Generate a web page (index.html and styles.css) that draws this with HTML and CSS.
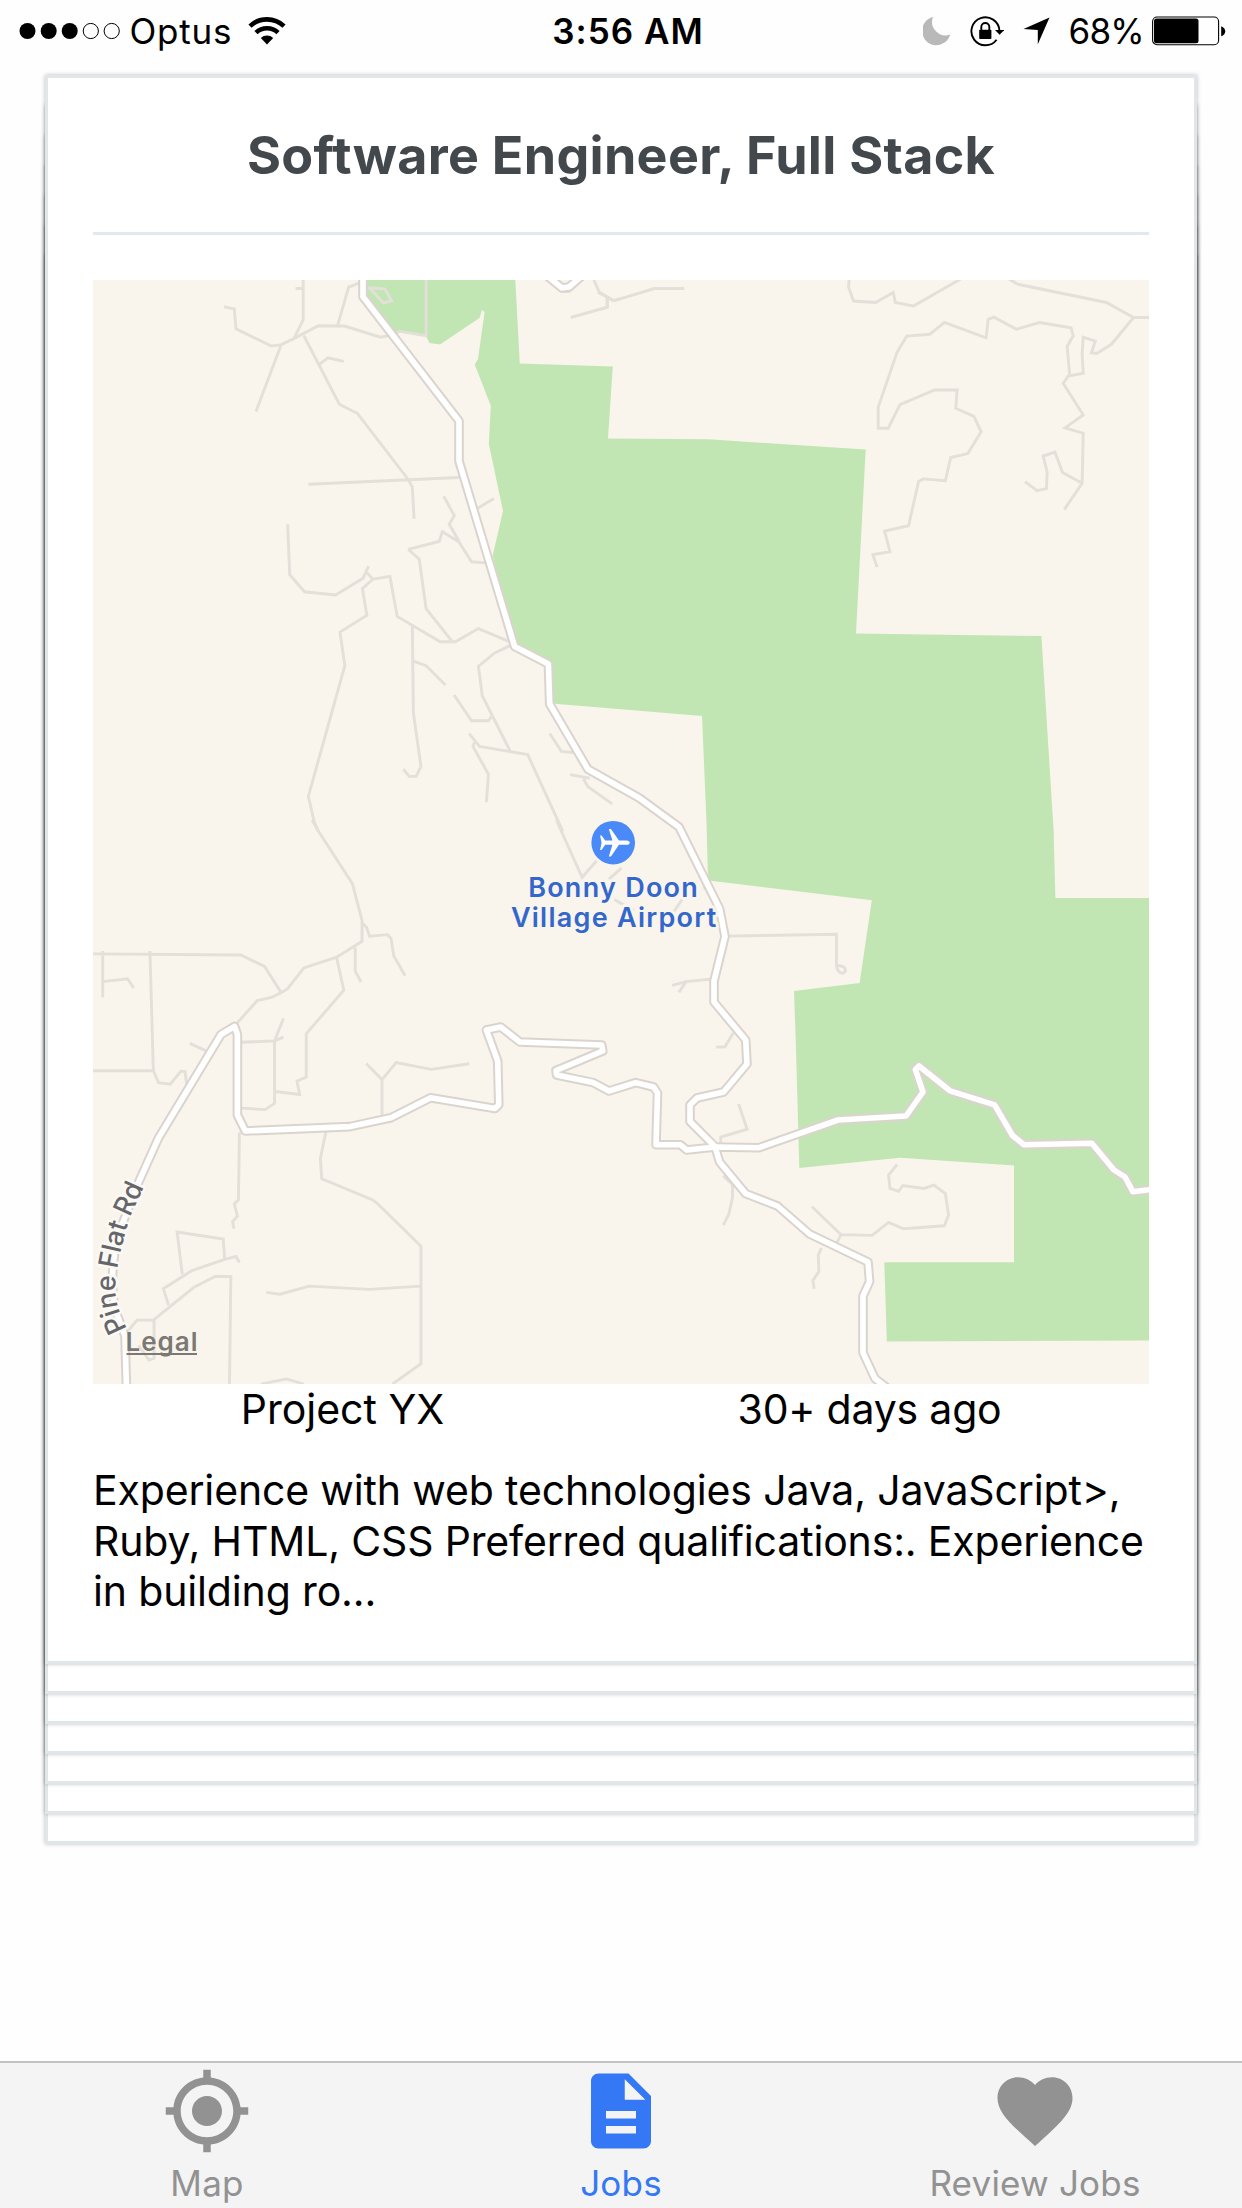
FILE: index.html
```
<!DOCTYPE html>
<html lang="en">
<head>
<meta charset="utf-8">
<title>Jobs</title>
<link rel="stylesheet" href="styles.css">
</head>
<body>
<div class="screen">
  <header class="status">
    <div class="status-left">
      <svg class="signal" width="102" height="20" viewBox="0 0 102 20">
        <circle cx="8.5" cy="10" r="8"/><circle cx="29.7" cy="10" r="8"/><circle cx="50.7" cy="10" r="8"/>
        <circle class="empty" cx="71.8" cy="10" r="7.6"/><circle class="empty" cx="92.7" cy="10" r="7.6"/>
      </svg>
      <span class="carrier">Optus</span>
      <svg class="wifi" width="38" height="28" viewBox="0 0 38 28">
        <path class="arc" d="M2 9.2a24.5 24.5 0 0 1 34 0"/>
        <path class="arc" d="M8 15.6a16 16 0 0 1 22 0"/>
        <path d="M19 27.500l-6.200-6.500a9 9 0 0 1 12.400 0z"/>
      </svg>
    </div>
    <span class="time">3:56 AM</span>
    <div class="status-right">
      <svg class="moon" width="28" height="30" viewBox="0 0 28 30"><path d="M10 1A14.300 14.300 0 1 0 27.200 18.500A13.500 13.500 0 0 1 10 1z"/></svg>
      <svg class="lock" width="34" height="32" viewBox="0 0 34 32">
        <path class="ring" d="M26.600 24.700A14 14 0 1 1 29.400 15.500"/>
        <path d="M25 15h9.200l-4.600 4.800z"/>
        <rect x="9.200" y="14.800" width="12.200" height="9.200" rx="0.800"/>
        <path class="ring" d="M11.300 15v-3a4 4 0 0 1 8 0v3"/>
      </svg>
      <svg class="arrow" width="27" height="28" viewBox="0 0 27 28"><path d="M26.500 0.500L14.800 27.200V13L0.500 12z"/></svg>
      <span class="percent">68%</span>
      <svg class="battery" width="74" height="30" viewBox="0 0 74 30">
        <rect class="shell" x="0.600" y="1" width="66" height="27.700" rx="4.500"/>
        <rect x="2" y="2.500" width="44.500" height="24.800" rx="2.500"/>
        <path d="M69.200 10.200q4 1.500 4 5t-4 5z"/>
      </svg>
    </div>
  </header>

  <main class="deck">
    <div class="sheet s6"></div>
    <div class="sheet s5"></div>
    <div class="sheet s4"></div>
    <div class="sheet s3"></div>
    <div class="sheet s2"></div>
    <div class="sheet s1"></div>
    <article class="sheet card">
      <h1 class="title">Software Engineer, Full Stack</h1>
      <svg class="map" width="1056" height="1104" viewBox="93 280 1056 1104">
        <defs>
          <g id="roads">
            <path d="M363 270V296.800L459 421V461L514.600 646.400L548.400 664L549.700 704L588 769.300L639.300 798L679 827L719.600 908.800L725 936.500L714 981V1002L745.700 1040L747 1064L723.600 1092L697 1098L690 1105V1121.500L715 1146.600L719.600 1162L745.700 1193.600L777.500 1206L809.600 1234L868 1262L869.600 1281.600L863 1296V1352.700L875 1378.600L890 1390"/>
            <path d="M126.500 1390L125 1336L116 1312Q108 1280 118 1235L138.500 1182.500L158.500 1138L221 1034.500L234.600 1026.400L237.400 1034.500V1115L245.300 1131L350 1126.600L391 1117.800L430.600 1097.800L495 1108.500L498.800 1104.800L497.700 1061L486.400 1030L500.800 1027L519.800 1042L601.700 1045L602.800 1051L556 1070.500L556.600 1075L593 1082.600L609 1091L635.700 1082.600L653.600 1087L657.500 1093L656 1144.800H680.400L686.800 1150L715 1147L759 1147.700L838 1120L906 1116L923 1092L915.400 1069.700L919 1066L950 1090.800L994.600 1104.800L1012.500 1135.500L1024 1144.800L1091.800 1143.300L1114 1170L1125 1177L1133 1191.800L1155 1189"/>
            <path d="M546 275L562 288L569 287L583 275"/>
          </g>
          <path id="pine" d="M127.500 1329C118 1312 114.500 1297 115.500 1282C117 1262 124 1235 131 1215L147 1180"/>
        </defs>
        <path class="park" d="M361 280H515.300L519.800 363.600L612.800 366.400L608 438.600L709 439.300L865.700 449.600L856 633.600L1041.400 636L1053.600 830L1055.400 898H1149V1340.600L886.800 1341.600L884.300 1262.200H1014V1165.500L900 1157.700L799.300 1168L796 1049L794 991L859.600 983L871.800 900.300L712.500 881L708 880L706.400 820L702 716L600 707.500L551 703.500L548 664L514.600 646L492.600 555.700L503 511L488.800 444L490.800 405.700L474.700 364.600L478 359L484.600 312L482 310L479.500 318L440 344.600L429.500 343L426 336L400 331L388 334L361 297z"/>

        <!-- lanes: one group for each quarter of the sheet -->
        <g class="lane" transform="translate(80 270) scale(.34439 .35714)">
          <path d="M418 103L448 109L453 165L556 213L585 209L625 190L692 156L768 157L872 188L890 185L930 172L1005 184V20M648 20V140L622 190M626 52H648M812 36L780 48L748 155M583 212L511 396M650 184L753 376L806 402L952 585L965 608L970 697M694 265L720 246L766 256M663 600L1100 581M840 50L881 92L905 86L885 53zM1358 28L1400 60H1420L1455 28M1492 28L1508 62L1548 86L1570 80M1425 133L1531 104V78"/>
          <path d="M603 712L609 853L652 901L742 910L822 863L838 829M834 848L850 866L900 858L921 970L1046 1041H1090L1157 1004L1245 1040M850 866L820 892L833 967L755 1014L769 1108L663 1474L680 1545L692 1572M953 782L985 810L1005 948L1080 1039M953 782L1043 760L1052 733L1100 761L1137 817L1178 820M1056 633L1087 688L1072 712L1100 758M1155 667L1202 640M965 998L968 1240L990 1390L976 1418H956L939 1398M968 1095L1005 1108L1061 1162M1086 1190L1137 1262H1186L1196 1248M1250 1051L1203 1073L1157 1110L1168 1192L1249 1347M1130 1298L1160 1334L1300 1357L1402 1572M1145 1323L1141 1334L1186 1412L1180 1490M1364 1298L1398 1348L1432 1351M1423 1413L1480 1423M1462 1425L1475 1447L1545 1495"/>
        </g>
        <g class="lane" transform="translate(600 270) scale(.35714)">
          <path d="M-6 62L40 86L152 52H236M0 111L20 104V78M698 20L696 48L710 87L772 91L821 63L827 91L878 101L1010 25M1145 25L1170 40L1418 91L1494 133H1540M1494 133L1432 208L1392 233L1376 232L1387 199L1353 188L1350 235L1353 289L1311 297L1297 317L1353 406L1302 442L1353 457L1350 597L1300 671M1350 597L1295 567L1274 510L1241 521L1252 566L1250 612L1224 618L1190 593M1315 292L1308 214L1325 184L1319 162L1230 147L1166 166L1103 132L1087 138L1081 190L964 147L923 180L859 185L832 230L779 384V443H807L840 377L937 336H1000L996 387L1047 410L1067 453L1030 514L982 525L967 590L905 585L892 592L864 716L797 731L812 789L764 797L776 832"/>
        </g>
        <g class="lane" transform="translate(80 820) scale(.34439 .36991)">
          <path d="M674 0L692 30L791 172L819 272V328L745 371L650 400L603 456L585 466L558 479L515 488L455 550M821 280L832 290L841 314L893 310L903 320L911 367L944 421M799 345V408L816 438M745 371L766 460L657 578V695L630 706L638 742L568 734M38 362L467 365L536 396L585 468M66 354V480M66 437L138 429L156 454M203 354L213 678L228 710L262 714L293 679L305 680L310 716M38 678H213M319 604L366 624M470 601L565 597L591 587M565 597L591 536M565 597V766L538 783L470 779M877 797V702L831 658M877 702L918 656L1020 674L1130 659M463 845L460 1027L448 1038L457 1071L443 1086L447 1105M714 843L698 915L702 970L850 1027L865 1038L990 1152V1470L907 1525M541 1277L581 1282L665 1260L840 1269L990 1260M297 1228L282 1114L416 1133L420 1188M463 1196L453 1180L420 1188L325 1218L242 1267L257 1311M140 1380L166 1352H213L330 1264L392 1234H438L434 1530M215 1352V1455L200 1460L170 1420M525 1525L600 1511L650 1525M1383 0L1458 155L1500 110"/>
        </g>
        <g class="lane" transform="translate(600 820) scale(.35714 .36991)">
          <path d="M25 160L60 130M40 215L95 245M205 250L235 208M290 186L300 180M355 314L662 309V392L680 396Q695 408 680 414Q664 414 662 392M315 430L241 437L202 447M241 437L221 466M373 576L350 613L325 614M388 768L412 836L338 857V880M345 962L371 985V1020L361 1065L345 1095M593 1045L675 1121L662 1145M675 1121L762 1123L808 1088L850 1105L964 1097L976 1068L967 1010L935 987L907 996L848 988L836 1004L812 996L808 960L832 931M620 1157L611 1177L613 1220L596 1245L600 1267"/>
        </g>

        <use href="#roads" class="casing"/>
        <use href="#roads" class="surface"/>

        <text class="road-name"><textPath href="#pine" textLength="149">Pine Flat Rd</textPath></text>
        <text class="legal" x="125.500" y="1351">Legal</text>
        <path class="legal-line" d="M126.500 1354H197"/>

        <circle class="pin" cx="613.200" cy="842.700" r="21.800"/>
        <path class="plane" transform="translate(614.600 842.700) rotate(90) scale(1.450) translate(-12 -12)" d="M21.500 16v-1.500l-8-5.500V3.500c0-.83-.67-2-1.500-2s-1.500 1.170-1.500 2V9l-8 5.500v1.500l8-2.500V18.500l-3.500 2.500V22l5-1 5 1v-1l-3.500-2.500v-5l8 2.500z"/>
        <text class="place" x="613.600" y="897">Bonny Doon</text>
        <text class="place" x="614.200" y="927">Village Airport</text>
      </svg>
      <div class="facts">
        <span>Project YX</span>
        <span class="age">30+ days ago</span>
      </div>
      <p class="summary">Experience with web technologies Java, JavaScript&gt;, Ruby, HTML, CSS Preferred qualifications:. Experience in building ro...</p>
    </article>
  </main>

  <nav class="tabs">
    <a class="tab">
      <svg width="90" height="90" viewBox="0 0 24 24"><path d="M12 8c-2.210 0-4 1.790-4 4s1.790 4 4 4 4-1.790 4-4-1.790-4-4-4zm8.940 3c-.46-4.170-3.770-7.480-7.940-7.940V1h-2v2.060C6.830 3.520 3.520 6.830 3.060 11H1v2h2.060c.46 4.170 3.770 7.480 7.940 7.940V23h2v-2.060c4.170-.46 7.480-3.770 7.940-7.940H23v-2h-2.060zM12 19c-3.870 0-7-3.130-7-7s3.130-7 7-7 7 3.130 7 7-3.130 7-7 7z"/></svg>
      <span>Map</span>
    </a>
    <a class="tab active">
      <svg width="90" height="90" viewBox="0 0 24 24"><path d="M14 2H6c-1.100 0-1.990.9-1.990 2L4 20c0 1.100.89 2 1.990 2H18c1.100 0 2-.9 2-2V8l-6-6zm2 16H8v-2h8v2zm0-4H8v-2h8v2zm-3-5V3.500L18.500 9H13z"/></svg>
      <span>Jobs</span>
    </a>
    <a class="tab">
      <svg width="90" height="90" viewBox="0 0 24 24"><path d="M12 21.350l-1.450-1.320C5.400 15.360 2 12.280 2 8.500 2 5.420 4.420 3 7.500 3c1.740 0 3.410.81 4.500 2.090C13.090 3.810 14.760 3 16.500 3 19.580 3 22 5.420 22 8.500c0 3.780-3.400 6.860-8.550 11.540L12 21.350z"/></svg>
      <span>Review Jobs</span>
    </a>
  </nav>
</div>
</body>
</html>
```
FILE: styles.css
```
* { box-sizing: border-box; }

body {
  margin: 0;
  background: #fff;
  color: #000;
  font-family: Inter, "Liberation Sans", sans-serif;
}

svg { display: block; flex: none; }

.screen {
  display: flex;
  flex-direction: column;
  width: 1242px;
  height: 2208px;
  background: #fefefe;
  overflow: hidden;
}

/* status bar */
.status {
  display: grid;
  grid-template-columns: 1fr auto 1fr;
  align-items: center;
  height: 60px;
  padding: 0 16px 0 19px;
  font-size: 35px;
  line-height: 60px;
}
.status-left, .status-right { display: flex; align-items: center; }
.status-right { justify-content: flex-end; }
.carrier, .time, .percent { padding-top: 1px; }
.carrier { margin-left: 8.5px; letter-spacing: 0.8px; }
.time { padding-left: 11px; font-weight: 600; letter-spacing: 1px; }
.percent { margin-left: 18px; letter-spacing: -0.7px; }
.signal .empty { fill: none; stroke: #000; stroke-width: 1; }
.wifi { margin-left: 16px; }
.wifi .arc { fill: none; stroke: #000; stroke-width: 4.6; }
.moon { fill: #b9b9b9; }
.lock { margin-left: 19px; }
.lock .ring { fill: none; stroke: #000; stroke-width: 1.9; }
.arrow { margin-left: 19px; }
.battery { margin-left: 8px; }
.battery .shell { fill: none; stroke: #000; stroke-width: 1.1; }

/* stacked cards */
.deck {
  display: grid;
  flex: 1;
  align-items: start;
  padding: 15px 45px 0;
}
.sheet {
  grid-area: 1 / 1;
  height: 1589px;
  border: 3px solid #e1e6e9;
  background: #fff;
  box-shadow: 0 0 4px rgba(0, 0, 0, 0.26);
}
.s1 { transform: translateY(30px); }
.s2 { transform: translateY(60px); }
.s3 { transform: translateY(90px); }
.s4 { transform: translateY(120px); }
.s5 { transform: translateY(150px); }
.s6 { transform: translateY(180px); }

.card { position: relative; padding: 45px 45px 0; }
.title {
  margin: 0 0 45px;
  padding: 1px 0 44px;
  border-bottom: 3px solid #e1e8ee;
  color: #43484d;
  font-size: 52px;
  font-weight: 700;
  line-height: 64px;
  letter-spacing: 0.3px;
  text-align: center;
}
.facts {
  display: grid;
  grid-template-columns: 1fr 1fr;
  margin: 0 16px 31px -14px;
  font-size: 41px;
  line-height: 50px;
  text-align: center;
}
.facts .age { letter-spacing: -0.2px; }
.summary {
  margin: 0;
  font-size: 41px;
  line-height: 50.5px;
  letter-spacing: -0.15px;
}

/* map */
.map { background: #f9f5ed; }
.park { fill: #c2e6b3; }
.lane path {
  fill: none;
  stroke: #e3dfd9;
  stroke-width: 2.9;
  vector-effect: non-scaling-stroke;
}
.casing, .surface { fill: none; stroke-linejoin: round; }
.casing { stroke: #dbd4ce; stroke-width: 9.6; }
.surface { stroke: #fff; stroke-width: 5.6; }
.map text { font-weight: 500; font-size: 27px; }
.map .road-name {
  fill: #66666a;
  stroke: #fbf9f4;
  stroke-width: 5;
  stroke-linejoin: round;
  paint-order: stroke;
}
.map .legal { fill: #7c7974; font-weight: 600; font-size: 26px; letter-spacing: 1px; }
.legal-line { stroke: #7c7974; stroke-width: 2; }
.pin { fill: #4a89f8; }
.plane { fill: #fff; }
.map .place {
  fill: #3467cb;
  stroke: #f9f5ed;
  stroke-width: 6;
  stroke-linejoin: round;
  paint-order: stroke;
  font-weight: 600;
  letter-spacing: 1.25px;
  text-anchor: middle;
}

/* tab bar */
.tabs {
  display: grid;
  grid-template-columns: repeat(3, 1fr);
  height: 147px;
  border-top: 2px solid #c3c3c3;
  background: #f4f4f4;
}
.tab {
  display: flex;
  flex-direction: column;
  align-items: center;
  gap: 5px;
  padding-top: 3px;
  color: #929292;
  font-size: 35px;
  line-height: 44px;
  letter-spacing: 0.2px;
}
.tab svg { fill: currentColor; }
.tab.active { color: #3478f6; }
```
